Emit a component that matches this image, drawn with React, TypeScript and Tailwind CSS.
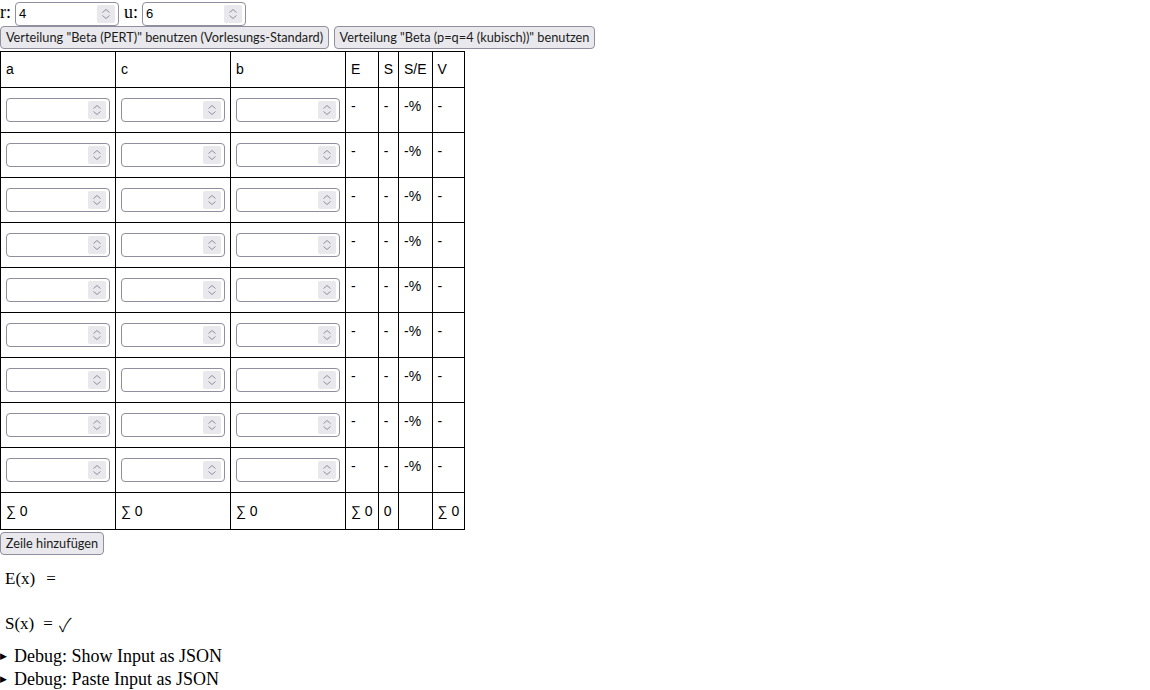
import React from "react";

const serif = { fontFamily: '"Liberation Serif", "DejaVu Serif", serif' };

function Spinner() {
  return (
    <span className="pointer-events-none absolute right-[3px] top-[2px] flex h-[18px] w-[18px] items-center justify-center rounded-[2px] bg-[#e9e9ed]">
      <svg width="18" height="18" viewBox="0 0 18 18" fill="none">
        <path d="M5.5 7.5 L9 4.5 L12.5 7.5" stroke="#8f8f9d" strokeWidth="1" />
        <path d="M5.5 10.5 L9 13.5 L12.5 10.5" stroke="#8f8f9d" strokeWidth="1" />
      </svg>
    </span>
  );
}

function NumberBox({ value, width }: { value?: string; width: string }) {
  return (
    <span className={`relative inline-block h-[24px] rounded-[4px] border border-[#8f8f9d] bg-white align-middle ${width}`}>
      <input
        type="text"
        defaultValue={value ?? ""}
        className="block h-full w-full bg-transparent pl-[3px] pr-[24px] text-[13px] text-black outline-none"
        style={{ fontFamily: '"Liberation Sans", Arial, sans-serif' }}
      />
      <Spinner />
    </span>
  );
}

function Btn({ children, w }: { children: React.ReactNode; w: string }) {
  return (
    <button
      className={`inline-flex h-[23px] items-center justify-center whitespace-nowrap rounded-[4px] border border-[#8f8f9d] bg-[#e9e9ed] text-[12.75px] text-[#1b1b1b] ${w}`}
      style={{ fontFamily: 'Lato, "Noto Sans", sans-serif' }}
    >
      {children}
    </button>
  );
}

function Toggle({ label }: { label: string }) {
  return (
    <details>
      <summary className="flex cursor-pointer list-none items-center [&::-webkit-details-marker]:hidden">
        <span className="w-[14px] text-[9px]" style={{ fontFamily: '"DejaVu Sans", sans-serif' }}>
          ▶
        </span>
        <span>{label}</span>
      </summary>
    </details>
  );
}

const rows = Array.from({ length: 9 }, (_, i) => i);

export default function App() {
  const cell = "border border-black px-[5px]";
  return (
    <div className="text-[18px] text-black" style={serif}>
      <div className="flex h-[25px] items-center">
        <span>r:</span>
        <span className="ml-[4px]"><NumberBox value="4" width="w-[104px]" /></span>
        <span className="ml-[5px]">u:</span>
        <span className="ml-[4px]"><NumberBox value="6" width="w-[104px]" /></span>
      </div>
      <div className="mt-[1px] flex gap-[5px]">
        <Btn w="w-[329px]">Verteilung "Beta (PERT)" benutzen (Vorlesungs-Standard)</Btn>
        <Btn w="w-[261px]">Verteilung "Beta (p=q=4 (kubisch))" benutzen</Btn>
      </div>
      <table
        className="mt-[2px] border-collapse border border-black text-[14px]"
        style={{ fontFamily: '"Liberation Sans", Arial, sans-serif' }}
      >
        <thead>
          <tr className="h-[36px]">
            {["a", "c", "b", "E", "S", "S/E", "V"].map((h) => (
              <th key={h} className={`${cell} text-left align-middle font-normal`}>
                {h}
              </th>
            ))}
          </tr>
        </thead>
        <tbody>
          {rows.map((r) => (
            <tr key={r} className="h-[45px]">
              {[0, 1, 2].map((c) => (
                <td key={c} className={`${cell} py-0 align-middle`}>
                  <NumberBox width="w-[104px]" />
                </td>
              ))}
              <td className={`${cell} pt-[8px] align-top`}>-</td>
              <td className={`${cell} pt-[8px] align-top`}>-</td>
              <td className={`${cell} pt-[8px] align-top`}>-%</td>
              <td className={`${cell} pt-[8px] align-top`}>-</td>
            </tr>
          ))}
          <tr className="h-[37px]">
            <td className={cell}>∑ 0</td>
            <td className={cell}>∑ 0</td>
            <td className={cell}>∑ 0</td>
            <td className={cell}>∑ 0</td>
            <td className={cell}>0</td>
            <td className={cell}></td>
            <td className={cell}>∑ 0</td>
          </tr>
        </tbody>
      </table>
      <div className="mt-[2px] flex">
        <Btn w="w-[104px]">Zeile hinzufügen</Btn>
      </div>
      <div className="mt-[14px] flex h-[20px] items-center pl-[5px] text-[17px]">
        <span>E(x)</span>
        <span className="ml-[11px]">=</span>
      </div>
      <div className="mt-[25px] flex h-[20px] items-center pl-[5px] text-[17px]">
        <span>S(x)</span>
        <span className="ml-[9px]">=</span>
        <span
          className="ml-[6px] text-[19px] font-light"
          style={{ fontFamily: '"Noto Sans CJK JP", "DejaVu Sans", sans-serif' }}
        >
          ✓
        </span>
      </div>
      <div className="mt-[11px] leading-[23px]">
        <Toggle label="Debug: Show Input as JSON" />
        <Toggle label="Debug: Paste Input as JSON" />
      </div>
    </div>
  );
}
